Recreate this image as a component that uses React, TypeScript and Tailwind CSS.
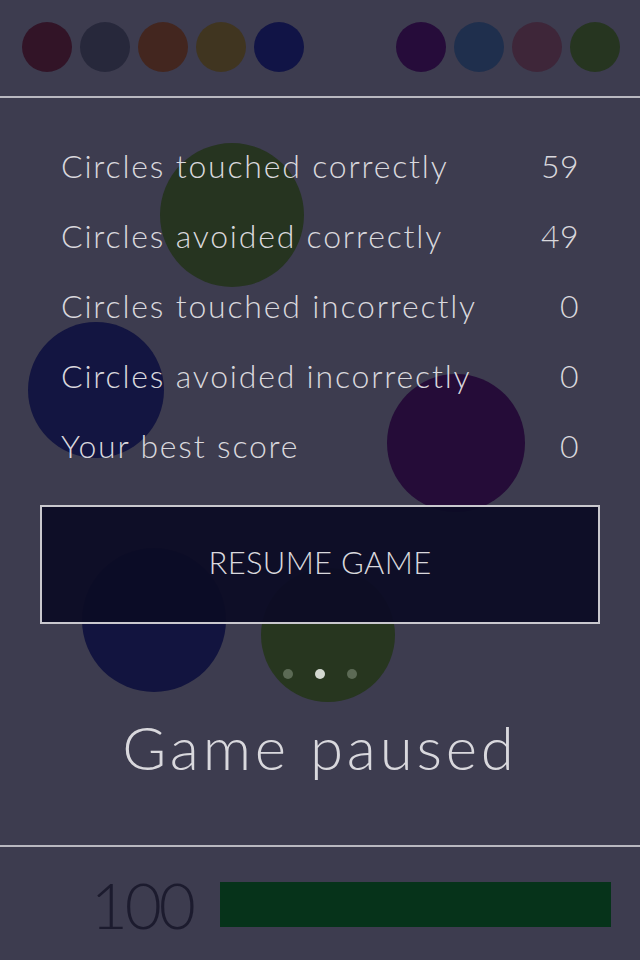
import React from "react";

const topLeft = ["#321427", "#27283b", "#43261f", "#403520", "#111446"];
const topRight = ["#260c3a", "#1f2f4d", "#3e2639", "#263520"];

// floating game circles behind the pause panel
const floating = [
  { x: 160, y: 45, d: 144, c: "#263420" },
  { x: 28, y: 224, d: 136, c: "#131541" },
  { x: 387, y: 276, d: 138, c: "#250c38" },
  { x: 82, y: 450, d: 144, c: "#12143f" },
  { x: 261, y: 470, d: 134, c: "#27361f" },
];

const stats = [
  { label: "Circles touched correctly", value: 59 },
  { label: "Circles avoided correctly", value: 49 },
  { label: "Circles touched incorrectly", value: 0 },
  { label: "Circles avoided incorrectly", value: 0 },
  { label: "Your best score", value: 0 },
];

export default function App() {
  return (
    <div
      className="w-[640px] h-[960px] bg-[#3d3c4f] flex flex-col overflow-hidden text-[#d9d8dd] font-light"
      style={{ fontFamily: "Lato, 'Open Sans', sans-serif" }}
    >
      <div className="h-[98px] shrink-0 border-b-2 border-[#b9b8c0] flex items-center justify-between pl-[22px] pr-[20px] pb-[2px]">
        <div className="flex gap-[8px]">
          {topLeft.map((c) => (
            <div key={c} className="w-[50px] h-[50px] rounded-full" style={{ background: c }} />
          ))}
        </div>
        <div className="flex gap-[8px]">
          {topRight.map((c) => (
            <div key={c} className="w-[50px] h-[50px] rounded-full" style={{ background: c }} />
          ))}
        </div>
      </div>

      <div className="relative flex-1 flex flex-col">
        {floating.map((f, i) => (
          <div
            key={i}
            className="absolute rounded-full"
            style={{ left: f.x, top: f.y, width: f.d, height: f.d, background: f.c }}
          />
        ))}

        <div className="relative flex flex-col pt-[33px] pl-[61px] pr-[61px]">
          {stats.map((s) => (
            <div key={s.label} className="h-[70px] flex items-center justify-between text-[32px] tracking-[1.8px]">
              <span>{s.label}</span>
              <span className="tracking-[0.5px]">{s.value}</span>
            </div>
          ))}
        </div>

        <div className="relative mx-[40px] mt-[24px] h-[119px] border-2 border-[#c9c8ce] bg-[#0c0c25]/95 flex items-center justify-center pb-[5px] text-[31px] tracking-[0.3px]">
          RESUME GAME
        </div>

        <div className="relative flex justify-center gap-[22px] mt-[45px]">
          <div className="w-[10px] h-[10px] rounded-full bg-[#5c6a55]" />
          <div className="w-[10px] h-[10px] rounded-full bg-[#d3d8d0]" />
          <div className="w-[10px] h-[10px] rounded-full bg-[#5c6a55]" />
        </div>

        <div className="relative text-center text-[60px] mt-[32px] leading-[72px] tracking-[3.8px]">Game paused</div>
      </div>

      <div className="h-[115px] shrink-0 border-t-2 border-[#b9b8c0] flex items-center pt-[2px]">
        <div className="w-[196px] text-right text-[64px] leading-none text-[#1c1b2e] tracking-[-3px] pr-[3px]">100</div>
        <div className="ml-[24px] w-[391px] h-[45px] bg-[#06331a]" />
      </div>
    </div>
  );
}
